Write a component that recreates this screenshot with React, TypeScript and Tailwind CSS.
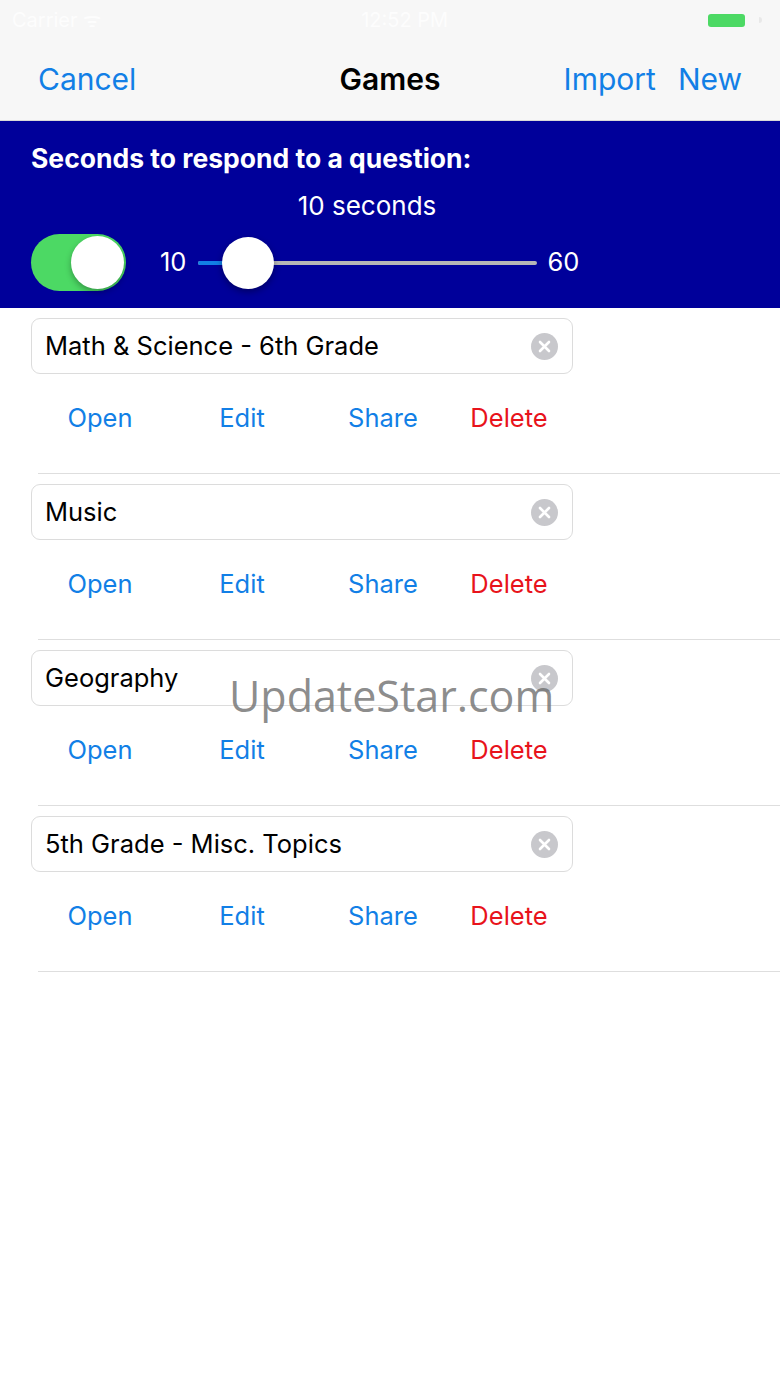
import React from "react";

const GAMES = [
  "Math & Science - 6th Grade",
  "Music",
  "Geography",
  "5th Grade - Misc. Topics",
];

function ClearIcon() {
  return (
    <svg width="27" height="27" viewBox="0 0 27 27">
      <circle cx="13.5" cy="13.5" r="13.5" fill="#c8c8cc" />
      <path d="M9 9 L18 18 M18 9 L9 18" stroke="#fff" strokeWidth="2.6" strokeLinecap="round" />
    </svg>
  );
}

function GameRow({ name }: { name: string }) {
  return (
    <div className="pt-[10px]">
      <div className="ml-[31px] w-[542px] h-[56px] rounded-[9px] border border-[#dcdcdc] flex items-center justify-between pl-[13px] pr-[14px]">
        <span className="text-[25.5px] text-black">{name}</span>
        <ClearIcon />
      </div>
      <div className="mt-[29px] h-[30px] flex pl-[29px] text-[25.5px] leading-[30px]">
        <button className="w-[142px] text-center text-[#127fe6]">Open</button>
        <button className="w-[142px] text-center text-[#127fe6]">Edit</button>
        <button className="w-[140px] text-center text-[#127fe6]">Share</button>
        <button className="w-[112px] text-center text-[#e8131b]">Delete</button>
      </div>
      <div className="mt-[40px] ml-[38px] border-t border-[#dedede]" />
    </div>
  );
}

export default function App() {
  return (
    <div className="relative w-[780px] h-[1387px] bg-white overflow-hidden" style={{ fontFamily: "Inter, 'Liberation Sans', sans-serif" }}>
      {/* Status + nav bar */}
      <div className="h-[121px] bg-[#f7f7f7] border-b border-[#d8d8d8]">
        <div className="h-[40px] flex items-center justify-between pl-[12px] pr-[18px] text-[#fdfdfd] text-[20px]">
          <span>Carrier ᯤ</span>
          <span>12:52 PM</span>
          <div className="flex items-center gap-[14px]">
            <div className="w-[37px] h-[13px] rounded-[3px] bg-[#4cd964]" />
            <div className="w-[3px] h-[6px] rounded-r bg-[#e8e8e8]" />
          </div>
        </div>
        <div className="h-[80px] grid grid-cols-[1fr_auto_1fr] items-center px-[38px] pb-[2px] text-[30px]">
          <button className="justify-self-start text-[#127fe6]">Cancel</button>
          <span className="font-semibold text-black">Games</span>
          <div className="justify-self-end flex gap-[22px] text-[#127fe6]">
            <button>Import</button>
            <button>New</button>
          </div>
        </div>
      </div>

      {/* Timer panel */}
      <div className="h-[187px] bg-[#00009a] pt-[22px] px-[31px] text-white">
        <div className="text-[26.5px] leading-[30px] font-bold">Seconds to respond to a question:</div>
        <div className="mt-[18px] text-[26px] leading-[30px] text-center pr-[46px]">10 seconds</div>
        <div className="mt-[13px] h-[57px] flex items-center">
          <div className="relative w-[95px] h-[57px] rounded-full bg-[#4cd964]">
            <div className="absolute right-[2px] top-[2px] w-[53px] h-[53px] rounded-full bg-white shadow-[0_3px_6px_rgba(0,0,0,0.3)]" />
          </div>
          <span className="ml-[34px] text-[25.5px]">10</span>
          <div className="relative ml-[12px] w-[339px] h-[4px] rounded-full bg-[#b6b6b6]">
            <div className="absolute left-0 top-0 h-[4px] w-[30px] rounded-full bg-[#127fe6]" />
            <div className="absolute left-[24px] top-[-24px] w-[52px] h-[52px] rounded-full bg-white shadow-[0_3px_7px_rgba(0,0,0,0.35)]" />
          </div>
          <span className="ml-[10px] text-[25.5px]">60</span>
        </div>
      </div>

      {/* Game list */}
      <div>
        {GAMES.map((g) => (
          <GameRow key={g} name={g} />
        ))}
      </div>

      {/* Watermark */}
      <div
        className="absolute left-[229px] top-[664px] text-[43px] text-[#6e6e6e]/80 pointer-events-none"
        style={{ fontFamily: "'Open Sans', sans-serif" }}
      >
        UpdateStar.com
      </div>
    </div>
  );
}
